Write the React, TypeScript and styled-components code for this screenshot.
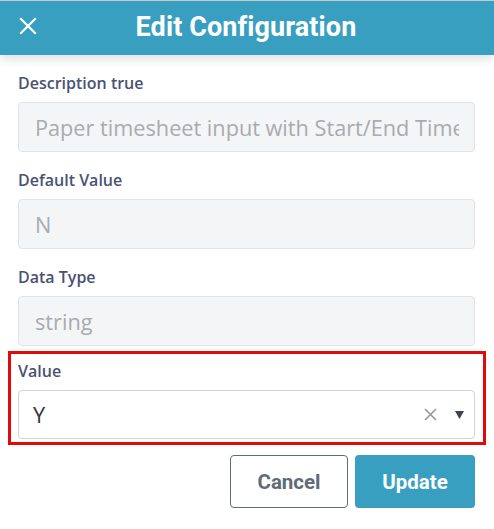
import React from "react";
import styled, { createGlobalStyle } from "styled-components";

const Global = createGlobalStyle`
  html, body { margin: 0; padding: 0; background: #fff; }
  body { font-family: "Open Sans", "Liberation Sans", sans-serif; }
`;

const Page = styled.div`
  width: 494px;
  height: 529px;
  overflow: hidden;
  border-top: 1px solid #c9c9c9;
  box-sizing: border-box;
`;

const Header = styled.header`
  position: relative;
  height: 54px;
  background: #389fc0;
  display: flex;
  align-items: center;
  justify-content: center;
  box-shadow: 0 4px 10px rgba(0, 0, 0, 0.12);
`;

const CloseButton = styled.button`
  position: absolute;
  left: 16px;
  top: 13px;
  width: 24px;
  height: 24px;
  padding: 0;
  border: none;
  background: transparent;
  display: flex;
  align-items: center;
  justify-content: center;
`;

const Title = styled.h1`
  margin: 0;
  font-family: Roboto, "Liberation Sans", sans-serif;
  font-weight: 700;
  font-size: 27px;
  color: #fff;
  letter-spacing: 0.1px;
  transform: translate(-1px, -1px);
`;

const Body = styled.div`
  padding: 17px 19px 0 18px;
  display: flex;
  flex-direction: column;
`;

const Field = styled.div<{ $gap?: number }>`
  display: flex;
  flex-direction: column;
  gap: 8px;
  margin-bottom: ${(p) => p.$gap ?? 17}px;
`;

const Label = styled.label`
  font-size: 16px;
  line-height: 22px;
  font-weight: 600;
  color: #4a5272;
`;

const ReadOnlyInput = styled.div`
  height: 50px;
  box-sizing: border-box;
  border: 1px solid #e1e3e7;
  border-radius: 4px;
  background: #f4f5f7;
  padding: 0 15px 0 16px;
  display: flex;
  align-items: center;
  font-size: 21.7px;
  color: #a9abae;
`;

const InputText = styled.span`
  flex: 1;
  min-width: 0;
  white-space: nowrap;
  overflow: hidden;
`;

const Highlight = styled.div`
  margin: -12px -11px 0 -10px;
  border: 3px solid #e10a0a;
  padding: 6px 8px 3px 7px;
`;

const Select = styled.div`
  height: 49px;
  box-sizing: border-box;
  border: 1px solid #cfd3d8;
  border-radius: 4px;
  background: #fff;
  padding: 0 10px 0 14px;
  display: flex;
  align-items: center;
  font-size: 21.7px;
  color: #333;
`;

const SelectValue = styled.span`
  flex: 1;
`;

const IconSlot = styled.span<{ $w: number; $mr?: number }>`
  width: ${(p) => p.$w}px;
  margin-right: ${(p) => p.$mr ?? 0}px;
  display: flex;
  align-items: center;
  justify-content: center;
`;

const Actions = styled.div`
  display: flex;
  justify-content: flex-end;
  gap: 7px;
  margin-top: 10px;
`;

const Button = styled.button<{ $primary?: boolean }>`
  height: 53px;
  box-sizing: border-box;
  border-radius: 4px;
  font-family: Roboto, "Liberation Sans", sans-serif;
  font-weight: 700;
  font-size: 20.5px;
  padding: 0;
  width: ${(p) => (p.$primary ? 120 : 118)}px;
  border: ${(p) => (p.$primary ? "none" : "1px solid #5f6b77")};
  background: ${(p) => (p.$primary ? "#389fc0" : "#fff")};
  color: ${(p) => (p.$primary ? "#fff" : "#5f6b77")};
`;

export default function App() {
  return (
    <Page>
      <Global />
      <Header>
        <CloseButton aria-label="Close">
          <svg width="18" height="18" viewBox="0 0 18 18">
            <path d="M2 2 L16 16 M16 2 L2 16" stroke="#fff" strokeWidth="2.2" strokeLinecap="square" />
          </svg>
        </CloseButton>
        <Title>Edit Configuration</Title>
      </Header>
      <Body>
        <Field>
          <Label>Description true</Label>
          <ReadOnlyInput>
            <InputText>Paper timesheet input with Start/End Time</InputText>
          </ReadOnlyInput>
        </Field>
        <Field>
          <Label>Default Value</Label>
          <ReadOnlyInput>
            <InputText>N</InputText>
          </ReadOnlyInput>
        </Field>
        <Field>
          <Label>Data Type</Label>
          <ReadOnlyInput>
            <InputText>string</InputText>
          </ReadOnlyInput>
        </Field>
        <Highlight>
          <Field $gap={0}>
            <Label>Value</Label>
            <Select>
              <SelectValue>Y</SelectValue>
              <IconSlot $w={24} $mr={12}>
                <svg width="13" height="13" viewBox="0 0 13 13">
                  <path d="M1 1 L12 12 M12 1 L1 12" stroke="#9a9a9a" strokeWidth="1.7" />
                </svg>
              </IconSlot>
              <IconSlot $w={10}>
                <svg width="9" height="8" viewBox="0 0 9 8">
                  <path d="M0 0 L9 0 L4.5 8 Z" fill="#3d434a" />
                </svg>
              </IconSlot>
            </Select>
          </Field>
        </Highlight>
        <Actions>
          <Button>Cancel</Button>
          <Button $primary>Update</Button>
        </Actions>
      </Body>
    </Page>
  );
}
